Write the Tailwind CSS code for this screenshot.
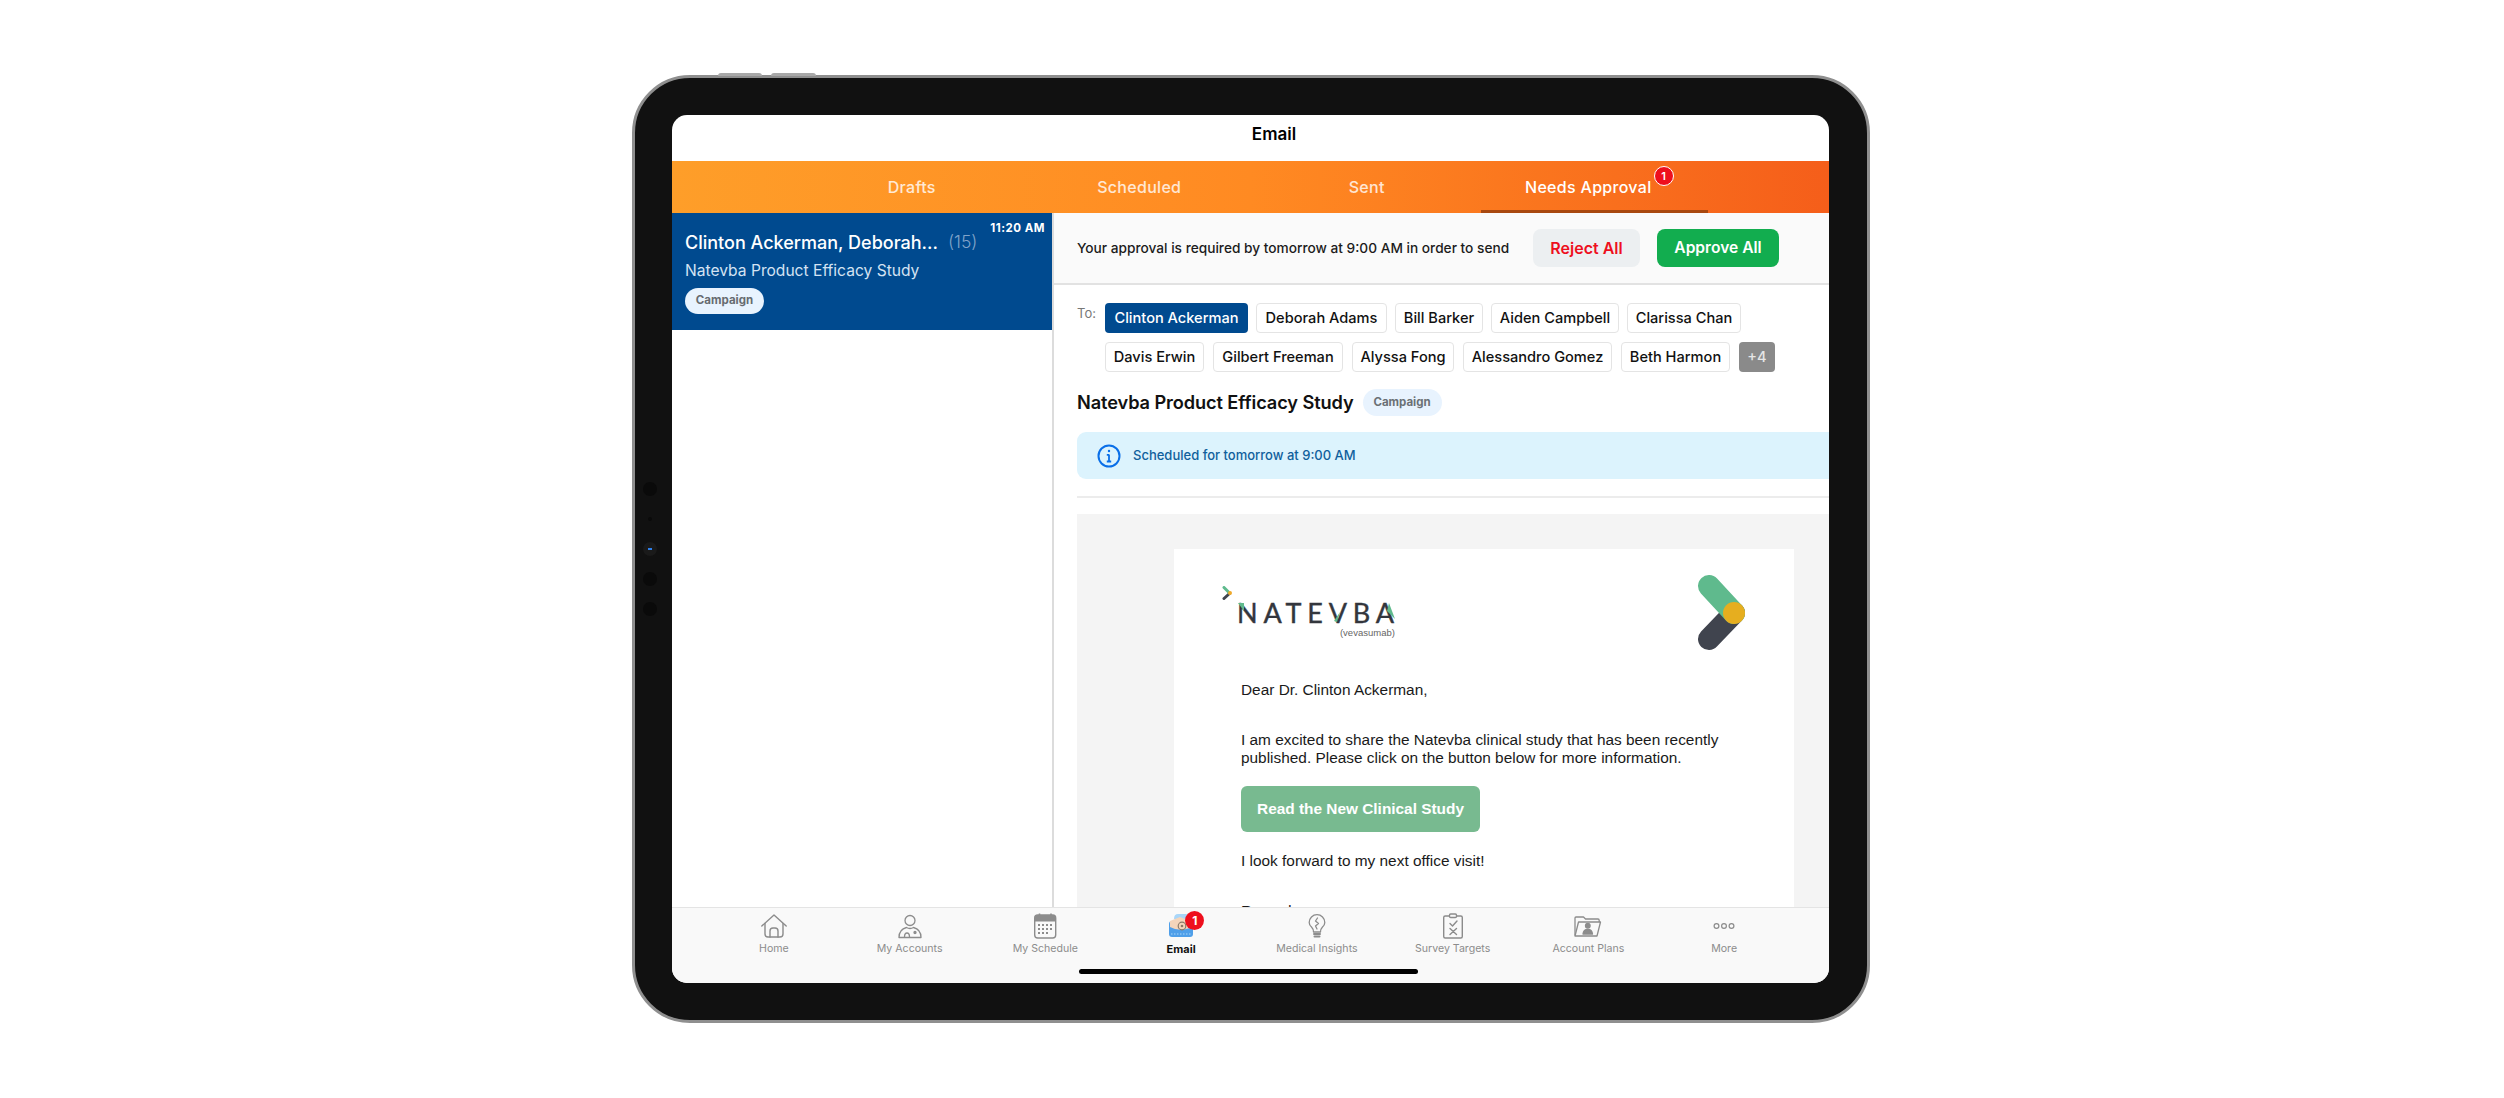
<!DOCTYPE html>
<html lang="en">
<head>
    <meta charset="UTF-8">
    <title>Email - Needs Approval</title>
    <script src="https://cdn.jsdelivr.net/npm/@tailwindcss/browser@4"></script>
</head>
<body class="bg-white w-[2504px] h-[1098px] overflow-hidden font-['Inter',sans-serif]">
    <div class="pt-[75px] pl-[632px]">
        <!-- Tablet frame -->
        <div class="relative w-[1238px] h-[948px] rounded-[58px] bg-[#111111] border-[3px] border-[#8f8f8f] pt-[37px] pl-[37px]">
            <!-- Top buttons -->
            <div class="absolute -top-[5px] left-[83px] w-[44px] h-[3px] rounded-t-sm bg-[#a8a8a8]"></div>
            <div class="absolute -top-[5px] left-[136px] w-[45px] h-[3px] rounded-t-sm bg-[#a8a8a8]"></div>
            <!-- Side camera dots -->
            <div class="absolute left-[8px] top-[404px] w-[14px] flex flex-col items-center">
                <div class="w-[14px] h-[14px] rounded-full bg-[#0a0a0a]"></div>
                <div class="w-[4px] h-[4px] rounded-full bg-[#0a0a0a] mt-[21px]"></div>
                <div class="w-[14px] h-[14px] rounded-full bg-[#1a1a1a] mt-[21px] flex items-center justify-center"><div class="w-[4px] h-[2px] bg-[#2f7fe8]"></div></div>
                <div class="w-[14px] h-[14px] rounded-full bg-[#0a0a0a] mt-[16px]"></div>
                <div class="w-[14px] h-[14px] rounded-full bg-[#0a0a0a] mt-[16px]"></div>
            </div>

            <!-- Screen -->
            <div class="w-[1157px] h-[868px] rounded-[15px] bg-white overflow-hidden flex flex-col">
                <div class="h-[46px] shrink-0 pl-[47px] pb-[6px] flex items-center justify-center text-[17px] font-semibold text-black">Email</div>

                <!-- Tabs -->
                <div class="h-[52px] shrink-0 pl-[126px] pr-[121px] grid grid-cols-4 bg-gradient-to-r from-[#fe9e29] via-[#ff8a22] to-[#f55e1a] text-[16px] tracking-[0.3px] font-medium text-white/80">
                    <div class="flex items-center justify-center">Drafts</div>
                    <div class="flex items-center justify-center">Scheduled</div>
                    <div class="flex items-center justify-center">Sent</div>
                    <div class="relative flex items-center justify-center pr-[12px] text-white">
                        Needs Approval
                        <span class="absolute left-[173px] top-[5px] w-[20px] h-[20px] rounded-full bg-[#ee0f1d] border border-white flex items-center justify-center text-[11px] font-semibold tracking-normal text-white">1</span>
                        <span class="absolute left-0 right-0 bottom-0 h-[3px] bg-[#a8480f]"></span>
                    </div>
                </div>

                <!-- Body -->
                <div class="flex-1 min-h-0 flex">
                    <!-- Message list -->
                    <div class="w-[380px] shrink-0">
                        <div class="h-[117px] bg-[#004a8f] relative pl-[13px] pt-[18px]">
                            <div class="absolute top-[7px] right-[7px] text-[11.5px] font-bold tracking-[0.5px] text-white">11:20 AM</div>
                            <div class="flex items-center h-[22px]">
                                <span class="text-[18px] font-medium text-white">Clinton Ackerman, Deborah...</span>
                                <span class="ml-[10px] text-[17.5px] font-light text-[#7fa3c9]">(15)</span>
                            </div>
                            <div class="mt-[7px] text-[15.6px] leading-[22px] text-[#d4e3f3]">Natevba Product Efficacy Study</div>
                            <div class="mt-[6px] w-[79px] h-[26px] rounded-full bg-[#e8f3fe] flex items-center justify-center text-[11.5px] font-bold text-[#666b70]">Campaign</div>
                        </div>
                    </div>

                    <!-- Detail -->
                    <div class="flex-1 min-w-0 border-l-2 border-[#dcdcdc] flex flex-col overflow-hidden">
                        <div class="h-[72px] shrink-0 bg-[#fafafa] border-b-2 border-[#e2e2e2] pl-[23px] flex items-center">
                            <span class="w-[456px] text-[13.7px] font-medium text-[#1c1c1c] whitespace-nowrap">Your approval is required by tomorrow at 9:00 AM in order to send</span>
                            <button class="w-[107px] h-[38px] rounded-[8px] bg-[#eceff1] text-[16px] font-semibold text-[#ee0f1d]">Reject All</button>
                            <button class="ml-[17px] w-[122px] h-[38px] rounded-[8px] bg-[#12ad4f] text-[15.6px] font-semibold text-white">Approve All</button>
                        </div>

                        <div class="pl-[23px] pt-[18px] flex text-[14.6px] font-medium text-[#111111]">
                            <span class="w-[28px] text-[13px] font-normal text-[#777777] pt-[1px]">To:</span>
                            <div class="flex flex-col gap-[9px]">
                                <div class="flex gap-[8px]">
                                    <span class="h-[30px] w-[143px] pt-[1px] flex items-center justify-center rounded-[4px] bg-[#004a8f] text-white">Clinton Ackerman</span>
                                    <span class="h-[30px] w-[131px] pt-[1px] flex items-center justify-center rounded-[4px] bg-white border border-[#e4e4e4]">Deborah Adams</span>
                                    <span class="h-[30px] w-[88px] pt-[1px] flex items-center justify-center rounded-[4px] bg-white border border-[#e4e4e4]">Bill Barker</span>
                                    <span class="h-[30px] w-[128px] pt-[1px] flex items-center justify-center rounded-[4px] bg-white border border-[#e4e4e4]">Aiden Campbell</span>
                                    <span class="h-[30px] w-[114px] pt-[1px] flex items-center justify-center rounded-[4px] bg-white border border-[#e4e4e4]">Clarissa Chan</span>
                                </div>
                                <div class="flex gap-[9px]">
                                    <span class="h-[30px] w-[99px] pt-[1px] flex items-center justify-center rounded-[4px] bg-white border border-[#e4e4e4]">Davis Erwin</span>
                                    <span class="h-[30px] w-[130px] pt-[1px] flex items-center justify-center rounded-[4px] bg-white border border-[#e4e4e4]">Gilbert Freeman</span>
                                    <span class="h-[30px] w-[102px] pt-[1px] flex items-center justify-center rounded-[4px] bg-white border border-[#e4e4e4]">Alyssa Fong</span>
                                    <span class="h-[30px] w-[149px] pt-[1px] flex items-center justify-center rounded-[4px] bg-white border border-[#e4e4e4]">Alessandro Gomez</span>
                                    <span class="h-[30px] w-[109px] pt-[1px] flex items-center justify-center rounded-[4px] bg-white border border-[#e4e4e4]">Beth Harmon</span>
                                    <span class="h-[30px] w-[36px] pt-[1px] flex items-center justify-center rounded-[4px] bg-[#8a8a8a] text-[#e6e6e6]">+4</span>
                                </div>
                            </div>
                        </div>

                        <div class="pl-[23px] mt-[17px] flex items-center h-[27px]">
                            <span class="text-[18.2px] font-semibold text-[#111111] tracking-[-0.1px]">Natevba Product Efficacy Study</span>
                            <span class="ml-[9px] w-[79px] h-[27px] rounded-full bg-[#e8f3fe] flex items-center justify-center text-[11.5px] font-bold text-[#6b7075]">Campaign</span>
                        </div>

                        <div class="ml-[23px] mt-[16px] h-[47px] shrink-0 rounded-l-[9px] bg-[#dcf3fd] flex items-center pl-[20px]">
                            <svg class="w-[24px] h-[24px]" viewBox="0 0 24 24" fill="none" stroke="#0a6fe8" stroke-width="2">
                                <circle cx="12" cy="12" r="10.5"/>
                                <path d="M12 10.5V17.5M9.8 10.8H12M9.8 17.5H14.2" stroke-width="1.8"/>
                                <circle cx="12" cy="7" r="1.2" fill="#0a6fe8" stroke="none"/>
                            </svg>
                            <span class="ml-[12px] pt-[1px] text-[13px] font-medium text-[#10609c]">Scheduled for tomorrow at 9:00 AM</span>
                        </div>

                        <div class="ml-[23px] mt-[17px] h-[2px] shrink-0 bg-[#ececec]"></div>

                        <!-- Email preview -->
                        <div class="ml-[23px] mt-[16px] flex-1 min-h-0 overflow-hidden bg-[#f4f4f4] pl-[97px] pt-[35px]">
                            <div class="w-[620px] h-[500px] bg-white">
                                <div class="pl-[48px] pr-[48px] pt-[25px] h-[120px] flex justify-between items-start">
                                    <div class="flex items-start gap-[5px]">
                                        <svg class="w-[10px] h-[14px] mt-[12px]" viewBox="0 0 10 14" fill="none" stroke-width="3" stroke-linecap="round">
                                            <path d="M7.5 7.5 L2 12.5" stroke="#40444e"/>
                                            <path d="M2 1.5 L7.5 7" stroke="#5fba8d"/>
                                            <circle cx="8" cy="7" r="2" fill="#f0a92a" stroke="none"/>
                                        </svg>
                                        <div class="pt-[25px] flex flex-col items-end">
                                            <span class="relative h-[27px] leading-[27px] text-[27px] font-['Lato',sans-serif] font-normal tracking-[5.8px] [-webkit-text-stroke:0.4px_#33363d] text-[#33363d] -mr-[5px]">NATEVBA<svg class="absolute left-0 top-0 w-[165px] h-[27px]" viewBox="0 0 165 27" fill="#5fba8d"><path d="M1 4 L7 4 L7 12 Z"/><path d="M97 22 L103 13 L100 23 Z"/><path d="M152 4 L158 20 L150 12 Z"/></svg></span>
                                            <span class="text-[9.5px] leading-[11px] mt-[1px] font-['Liberation_Sans',sans-serif] text-[#666666]">(vevasumab)</span>
                                        </div>
                                    </div>
                                    <svg class="w-[50px] h-[76px] mt-[1px]" viewBox="0 0 50 76" fill="none" stroke-width="22" stroke-linecap="round">
                                        <path d="M13 64 L38 38" stroke="#40444e"/>
                                        <path d="M13 11 L38 38" stroke="#5fba8d"/>
                                        <circle cx="38" cy="38" r="11" fill="#e6ae1f" stroke="none"/>
                                    </svg>
                                </div>
                                <div class="pl-[67px] pr-[40px] font-['Liberation_Sans',sans-serif] text-[15.4px] leading-[18px] text-[#1a1a1a]">
                                    <p class="pt-[12px]">Dear Dr. Clinton Ackerman,</p>
                                    <p class="mt-[32px]">I am excited to share the Natevba clinical study that has been recently published. Please click on the button below for more information.</p>
                                    <div class="mt-[19px] w-[239px] h-[46px] rounded-[6px] bg-[#78ba90] flex items-center justify-center font-bold text-white">Read the New Clinical Study</div>
                                    <p class="mt-[20px]">I look forward to my next office visit!</p>
                                    <p class="mt-[32px]">Regards,</p>
                                </div>
                            </div>
                        </div>
                    </div>
                </div>

                <!-- Bottom tab bar -->
                <div class="h-[76px] shrink-0 bg-[#f9f9f9] border-t border-[#e4e4e4] pl-[34px] pr-[37px] relative z-10">
                    <div class="grid grid-cols-8 text-[10.6px] leading-[14px] text-[#8c8c8c] text-center">
                        <div class="flex flex-col items-center pt-[3px]">
                            <svg class="w-[28px] h-[28px]" viewBox="0 0 28 28" fill="none" stroke="#8c8c8c" stroke-width="1.4" stroke-linejoin="round" stroke-linecap="round">
                                <path d="M1.8 15 L14 4 L26.2 15"/>
                                <path d="M5 12.5 V23 Q5 26 8 26 H20 Q23 26 23 23 V12.5"/>
                                <path d="M10 26 V20 Q10 17 13 17 H15 Q18 17 18 20 V26"/>
                            </svg>
                            <span class="mt-[3px]">Home</span>
                        </div>
                        <div class="flex flex-col items-center pt-[3px]">
                            <svg class="w-[28px] h-[28px]" viewBox="0 0 28 28" fill="none" stroke="#8c8c8c" stroke-width="1.3" stroke-linecap="round" stroke-linejoin="round">
                                <circle cx="14" cy="9.5" r="5"/>
                                <path d="M3 26.5 Q3 18.5 10.5 16.5 Q14 18.5 17.5 16.5 Q25 18.5 25 26.5 Z"/>
                                <path d="M8.5 26 Q8.5 22 11 22 Q13.5 22 13.5 26"/>
                                <circle cx="19" cy="21.5" r="1" fill="#8c8c8c"/>
                            </svg>
                            <span class="mt-[3px]">My Accounts</span>
                        </div>
                        <div class="flex flex-col items-center pt-[3px]">
                            <svg class="w-[28px] h-[28px]" viewBox="0 0 28 28" fill="none">
                                <rect x="3.7" y="4" width="21" height="23" rx="3" stroke="#8c8c8c" stroke-width="1.4"/>
                                <path d="M3.7 7 Q3.7 4 6.7 4 H21.7 Q24.7 4 24.7 7 V10.5 H3.7 Z" fill="#8c8c8c"/>
                                <path d="M8.5 2.5 V5 M20 2.5 V5" stroke="#8c8c8c" stroke-width="1.6"/>
                                <g fill="#8c8c8c">
                                    <rect x="7" y="13" width="2" height="2"/><rect x="11" y="13" width="2" height="2"/><rect x="15" y="13" width="2" height="2"/><rect x="19" y="13" width="2" height="2"/>
                                    <rect x="7" y="17" width="2" height="2"/><rect x="11" y="17" width="2" height="2"/><rect x="15" y="17" width="2" height="2"/><rect x="19" y="17" width="2" height="2"/>
                                    <rect x="7" y="21" width="2" height="2"/><rect x="11" y="21" width="2" height="2"/><rect x="15" y="21" width="2" height="2"/>
                                </g>
                            </svg>
                            <span class="mt-[3px]">My Schedule</span>
                        </div>
                        <div class="flex flex-col items-center pt-[3px] relative">
                            <svg class="w-[28px] h-[28px]" viewBox="0 0 28 28" fill="none">
                                <path d="M7 8 Q7 3 11 3 H19 Q22 3 22 8 Z" fill="#a9d6f8"/>
                                <path d="M2 13 Q2 10 5 10 H26 V23 Q26 26 23 26 H5 Q2 26 2 23 Z" fill="#4f9fe9"/>
                                <path d="M3 10 L13 6 L23 10 V17 Q12 21 3 16 Z" fill="#f4d5bb"/>
                                <circle cx="15" cy="15" r="3.8" stroke="#8a7a68" stroke-width="1.2"/>
                                <circle cx="15" cy="15" r="1.3" fill="#8a7a68"/>
                                <path d="M4 23 H24" stroke="#a9d6f8" stroke-width="1" stroke-dasharray="1.5 1.5"/>
                            </svg>
                            <span class="absolute left-[72px] top-[3px] w-[19px] h-[19px] rounded-full bg-[#ee0f1d] flex items-center justify-center text-[12px] font-bold text-white">1</span>
                            <span class="mt-[3px] font-bold text-[11px] text-[#111111]">Email</span>
                        </div>
                        <div class="flex flex-col items-center pt-[3px]">
                            <svg class="w-[28px] h-[28px]" viewBox="0 0 28 28" fill="none" stroke="#8c8c8c" stroke-width="1.3" stroke-linecap="round" stroke-linejoin="round">
                                <path d="M10.5 21 Q10.5 18 8.5 16 Q6.2 14 6.2 11.5 A7.8 7.8 0 0 1 21.8 11.5 Q21.8 14 19.5 16 Q17.5 18 17.5 21 Z"/>
                                <path d="M11 23 H17 M11.5 25.5 H16.5" stroke-width="2"/>
                                <path d="M14.5 7 L12.5 10 L15.5 12.5 L12.5 15 L14 18"/>
                            </svg>
                            <span class="mt-[3px]">Medical Insights</span>
                        </div>
                        <div class="flex flex-col items-center pt-[3px]">
                            <svg class="w-[28px] h-[28px]" viewBox="0 0 28 28" fill="none" stroke="#8c8c8c" stroke-width="1.4" stroke-linecap="round" stroke-linejoin="round">
                                <rect x="4.7" y="5" width="18.6" height="22" rx="1.5"/>
                                <rect x="10.5" y="3" width="7" height="3.5" rx="1.2" fill="#f9f9f9"/>
                                <path d="M11 12.5 L13.5 15 L18 10"/>
                                <path d="M11 17.5 L17.5 23.5 M17.5 17.5 L11 23.5"/>
                            </svg>
                            <span class="mt-[3px]">Survey Targets</span>
                        </div>
                        <div class="flex flex-col items-center pt-[3px]">
                            <svg class="w-[28px] h-[28px]" viewBox="0 0 28 28" fill="none" stroke="#8c8c8c" stroke-width="1.3" stroke-linejoin="round">
                                <path d="M1 24.5 V7 Q1 6 2 6 H9.5 L11.5 8 H24 Q25.2 8 25.2 9.5 V11"/>
                                <path d="M1 25 L4.5 11 H26.5 L23 25 Z"/>
                                <circle cx="13.8" cy="14.7" r="2.3" fill="#8c8c8c"/>
                                <path d="M9 23 Q9.5 18.3 13.8 18.3 Q18 18.3 18.5 23 Z" fill="#8c8c8c"/>
                            </svg>
                            <span class="mt-[3px]">Account Plans</span>
                        </div>
                        <div class="flex flex-col items-center pt-[3px]">
                            <svg class="w-[28px] h-[28px]" viewBox="0 0 28 28" fill="none" stroke="#8c8c8c" stroke-width="1.2">
                                <circle cx="6.5" cy="15" r="2.4"/><circle cx="14" cy="15" r="2.4"/><circle cx="21.5" cy="15" r="2.4"/>
                            </svg>
                            <span class="mt-[3px]">More</span>
                        </div>
                    </div>
                    <div class="absolute left-[407px] top-[61px] w-[339px] h-[5px] rounded-full bg-black"></div>
                </div>
            </div>
        </div>
    </div>
</body>
</html>
